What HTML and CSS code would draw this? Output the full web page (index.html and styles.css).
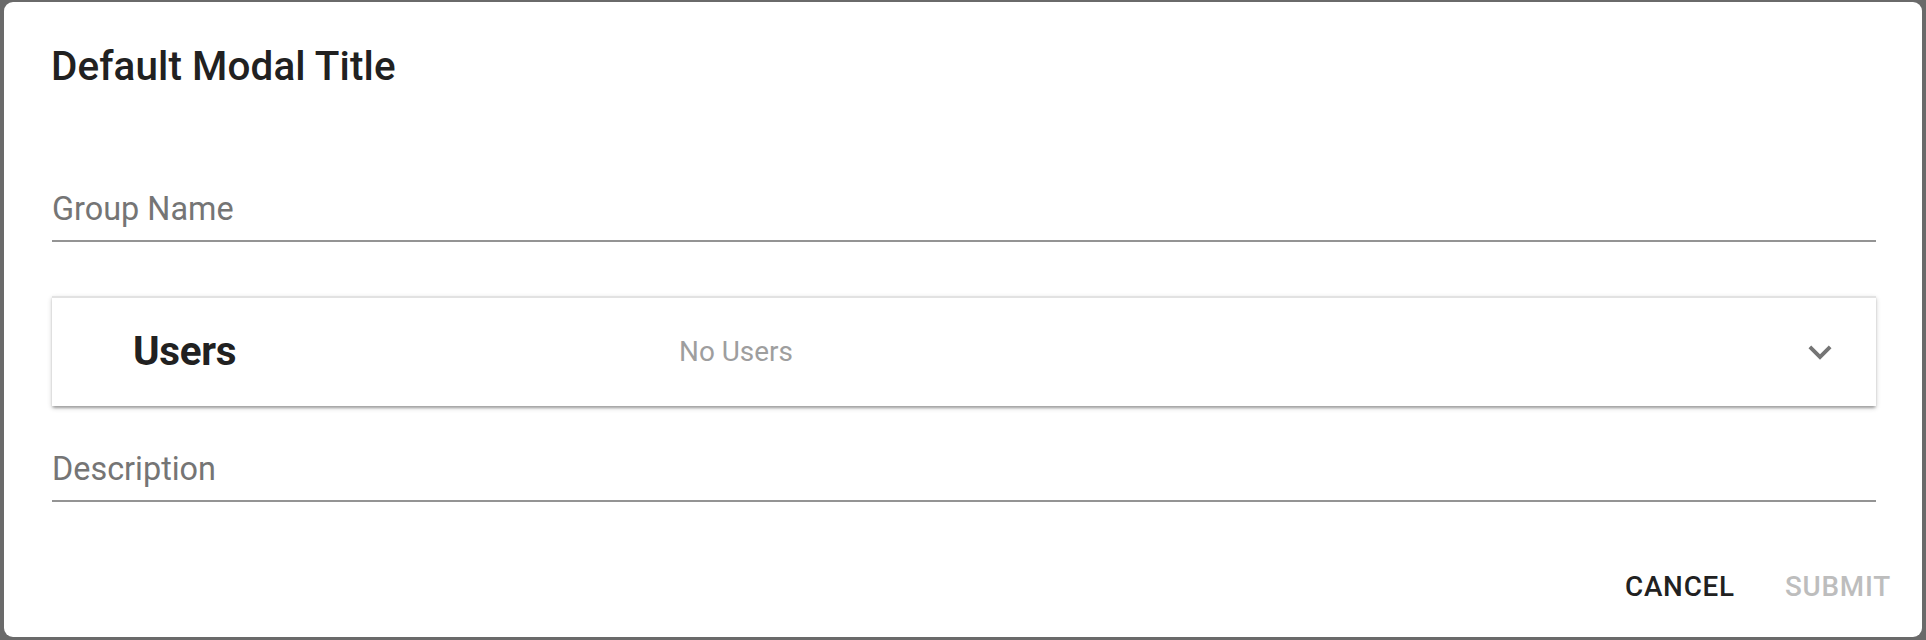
FILE: index.html
```html
<!DOCTYPE html>
<html lang="en">
<head>
<meta charset="utf-8">
<title>Default Modal Title</title>
<link rel="stylesheet" href="styles.css">
</head>
<body>
<div class="backdrop">
  <div class="dialog">
    <h2 class="dialog-title">Default Modal Title</h2>
    <div class="dialog-content">
      <div class="field field-first">
        <span class="field-label">Group Name</span>
      </div>
      <div class="panel">
        <div class="panel-summary">
          <div class="panel-heading">Users</div>
          <div class="panel-secondary">No Users</div>
          <div class="panel-icon">
            <svg viewBox="0 0 24 24" width="46" height="46" aria-hidden="true">
              <path d="M16.59 8.59L12 13.17 7.41 8.59 6 10l6 6 6-6z" fill="currentColor"/>
            </svg>
          </div>
        </div>
      </div>
      <div class="field field-desc">
        <span class="field-label">Description</span>
      </div>
    </div>
    <div class="dialog-actions">
      <button class="btn btn-cancel" type="button">Cancel</button>
      <button class="btn btn-submit" type="button" disabled>Submit</button>
    </div>
  </div>
</div>
</body>
</html>
```

FILE: styles.css
```css
html, body {
  margin: 0;
  padding: 0;
}

body {
  background: #6a6a6a;
  font-family: Roboto, "Liberation Sans", Arial, sans-serif;
  width: 1926px;
  height: 640px;
  overflow: hidden;
}

.backdrop {
  padding: 2px 4px 0 4px;
}

.dialog {
  width: 1918px;
  height: 635px;
  background: #ffffff;
  border-radius: 9px;
  box-sizing: border-box;
  display: flex;
  flex-direction: column;
}

.dialog-title {
  margin: 0;
  padding: 42px 46px 0 47px;
  font-size: 40.4px;
  line-height: 46px;
  font-weight: 500;
  color: #212121;
  letter-spacing: 0.1px;
}

.dialog-content {
  padding: 0 46px 0 48px;
}

.field {
  border-bottom: 2px solid #949494;
  padding-bottom: 7px;
  line-height: 36px;
}

.field-first {
  margin-top: 101px;
}

.field-label {
  font-size: 32.4px;
  color: #757575;
}

.panel {
  margin-top: 54px;
  border-top: 2px solid #e2e2e2;
  background: #fff;
  box-shadow: 0 2px 5px rgba(0, 0, 0, 0.2), 0 2px 2px rgba(0, 0, 0, 0.14), 0 4px 2px -2px rgba(0, 0, 0, 0.12);
}

.panel-summary {
  height: 108px;
  display: flex;
  align-items: center;
  padding: 0 33px 0 81px;
}

.panel-heading {
  width: 546px;
  font-size: 40.4px;
  line-height: 46px;
  font-weight: 700;
  color: #212121;
  letter-spacing: -0.3px;
}

.panel-secondary {
  flex: 1;
  font-size: 27.9px;
  line-height: 34px;
  color: #9e9e9e;
}

.panel-icon {
  width: 46px;
  height: 46px;
  color: #757575;
  display: flex;
}

.field-desc {
  margin-top: 45px;
}

.dialog-actions {
  display: flex;
  justify-content: flex-end;
  align-items: center;
  padding: 69px 31px 0 0;
  gap: 50px;
}

.btn {
  border: none;
  background: none;
  padding: 0;
  margin: 0;
  font-family: Roboto, "Liberation Sans", Arial, sans-serif;
  font-size: 27.8px;
  line-height: 32px;
  font-weight: 500;
  text-transform: uppercase;
  letter-spacing: 0.8px;
}

.btn-cancel {
  color: #212121;
}

.btn-submit {
  color: #bdbdbd;
}
```
